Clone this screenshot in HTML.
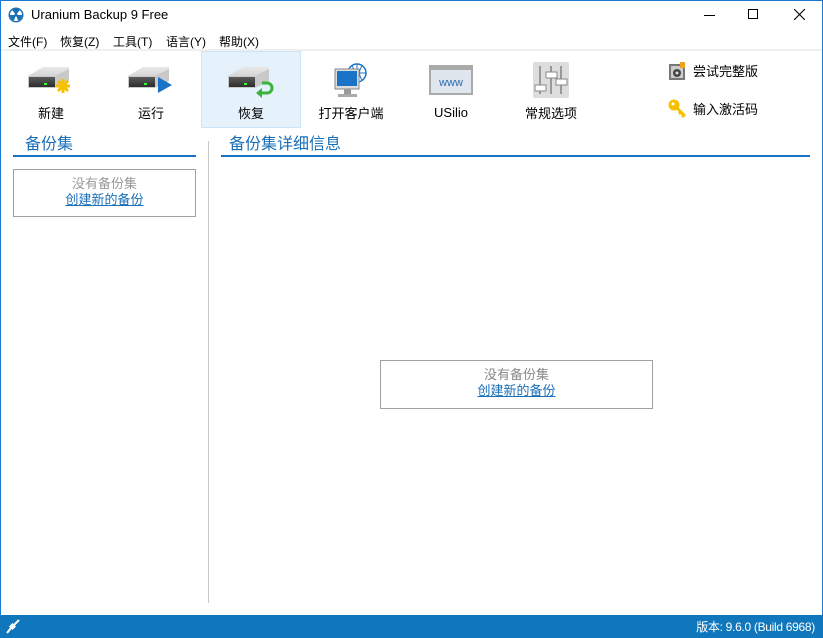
<!DOCTYPE html>
<html><head><meta charset="utf-8"><style>
*{margin:0;padding:0;box-sizing:border-box}
body{width:823px;height:638px;background:#fff;font-family:"Liberation Sans","Noto Sans CJK SC",sans-serif;position:relative;overflow:hidden;color:#000}
.abs{position:absolute}
.t{font-size:12px;white-space:nowrap}
.lbl{position:absolute;font-size:13px;text-align:center;white-space:nowrap}
a{color:#1a6fb8;text-decoration:underline}
</style></head><body>
<div class="abs" style="left:0;top:0;width:823px;height:638px;border:1px solid #1a79d2;border-bottom:none"></div>
<svg class="abs" style="left:8px;top:7px" width="16" height="16" viewBox="0 0 16 16"><circle cx="8" cy="8" r="7.5" fill="#1b6fb5"/><circle cx="8" cy="8" r="6" fill="#fff"/><path d="M8 8 L4 2.8 A6 6 0 0 1 12 2.8Z M8 8 L14 8 A6 6 0 0 1 10 13.6Z M8 8 L6 13.6 A6 6 0 0 1 2 8Z" fill="#1b6fb5"/><circle cx="8" cy="8" r="1.5" fill="#1b6fb5"/></svg>
<div class="abs" style="left:31px;top:7px;font-size:13px">Uranium Backup 9 Free</div>
<div class="abs" style="left:704px;top:15px;width:11px;height:1px;background:#000"></div>
<div class="abs" style="left:748px;top:9px;width:10px;height:10px;border:1px solid #000"></div>
<svg class="abs" style="left:794px;top:9px" width="11" height="11"><path d="M0 0L11 11M11 0L0 11" stroke="#000" stroke-width="1.1"/></svg>
<div class="abs t" style="left:8px;top:33px">文件(F)</div>
<div class="abs t" style="left:60px;top:33px">恢复(Z)</div>
<div class="abs t" style="left:113px;top:33px">工具(T)</div>
<div class="abs t" style="left:166px;top:33px">语言(Y)</div>
<div class="abs t" style="left:219px;top:33px">帮助(X)</div>
<div class="abs" style="left:1px;top:49px;width:821px;height:2px;background:#f0f0f0"></div>
<div class="abs" style="left:201px;top:51px;width:100px;height:77px;background:#e5f1fb;border:1px solid #cce4f7"></div>
<svg class="abs" style="left:0;top:55px" width="600" height="50">
<defs><linearGradient id="tp" x1="0" y1="0" x2="0" y2="1"><stop offset="0" stop-color="#e8e8e8"/><stop offset="1" stop-color="#bdbdbd"/></linearGradient><linearGradient id="fr" x1="0" y1="0" x2="0" y2="1"><stop offset="0" stop-color="#5a5a5a"/><stop offset="1" stop-color="#2e2e2e"/></linearGradient>
<g id="drv"><path d="M0 21 L15 12 L41 12 L41 15 L27 22 L27 33 L0 33Z" fill="url(#tp)"/><path d="M0 21 L27 21 L41 14 L41 26 L27 33 L0 33Z" fill="#c9c9c9"/><rect x="1" y="22" width="26" height="10" fill="url(#fr)"/><rect x="16" y="28" width="3" height="2" fill="#3f3"/></g></defs>
<use href="#drv" x="28" y="0"/><use href="#drv" x="128" y="0"/><use href="#drv" x="228" y="0"/>
<path d="M63 24 v14 M56 31 h14 M58 26 l10 10 M68 26 l-10 10" stroke="#f5c000" stroke-width="3"/>
<path d="M158 22 L172 30 L158 38Z" fill="#1a73c6"/>
<path d="M262 28 h5 a5 5 0 0 1 0 10 h-8" stroke="#3cb43c" stroke-width="3" fill="none"/><path d="M256 38 l6 -5 v10z" fill="#3cb43c"/>
<circle cx="357" cy="18" r="9" fill="#fff" stroke="#1a73c6" stroke-width="1.5"/><path d="M348 18h18M357 9v18M352 11q5 7 0 14M362 11q-5 7 0 14" stroke="#1a73c6" stroke-width="1" fill="none"/>
<rect x="335" y="14" width="24" height="20" fill="#ddd" stroke="#888"/><rect x="337" y="16" width="20" height="15" fill="#1a73c6"/><rect x="344" y="34" width="7" height="5" fill="#999"/><rect x="338" y="39" width="19" height="3" fill="#aaa"/>
<rect x="429" y="10" width="44" height="30" fill="#aaa"/><rect x="431" y="15" width="40" height="23" fill="#dfe6ee"/><text x="451" y="31" font-size="11" fill="#2a6cb0" text-anchor="middle" font-family="Liberation Sans">www</text>
<rect x="533" y="7" width="36" height="36" fill="#ddd" rx="2"/><path d="M540 11v28M551 11v28M561 11v28" stroke="#999" stroke-width="2"/><rect x="535" y="30" width="11" height="6" fill="#fff" stroke="#888"/><rect x="546" y="17" width="11" height="6" fill="#fff" stroke="#888"/><rect x="556" y="24" width="11" height="6" fill="#fff" stroke="#888"/>
</svg>
<div class="lbl" style="left:0;top:103px;width:102px">新建</div>
<div class="lbl" style="left:100px;top:103px;width:102px">运行</div>
<div class="lbl" style="left:200px;top:103px;width:102px">恢复</div>
<div class="lbl" style="left:300px;top:103px;width:102px">打开客户端</div>
<div class="lbl" style="left:400px;top:105px;width:102px">USilio</div>
<div class="lbl" style="left:500px;top:103px;width:102px">常规选项</div>
<svg class="abs" style="left:668px;top:61px" width="20" height="20"><rect x="1" y="3" width="16" height="16" fill="#777"/><rect x="3" y="5" width="12" height="12" fill="#ccc"/><circle cx="9" cy="12" r="4" fill="#444"/><circle cx="9" cy="12" r="1.5" fill="#ddd"/><rect x="12" y="1" width="5" height="6" fill="#f0a020"/></svg>
<div class="abs" style="left:693px;top:61px;font-size:13px">尝试完整版</div>
<svg class="abs" style="left:668px;top:99px" width="20" height="20"><circle cx="6" cy="6" r="5.5" fill="#f5c000"/><circle cx="5" cy="5" r="1.5" fill="#fff"/><path d="M9 9 L17 17 M13 13 l-2 2 M16 16 l-2 2" stroke="#f5c000" stroke-width="3"/></svg>
<div class="abs" style="left:693px;top:99px;font-size:13px">输入激活码</div>
<div class="abs" style="left:25px;top:130px;font-size:16px;color:#1a6fb8">备份集</div>
<div class="abs" style="left:13px;top:155px;width:183px;height:2px;background:#1a73c0"></div>
<div class="abs" style="left:13px;top:169px;width:183px;height:48px;border:1px solid #a0a0a0;text-align:center;font-size:13px;line-height:16px;padding-top:6px"><span style="color:#999">没有备份集</span><br><a>创建新的备份</a></div>
<div class="abs" style="left:208px;top:141px;width:1px;height:462px;background:#c8c8c8"></div>
<div class="abs" style="left:229px;top:130px;font-size:16px;color:#1a6fb8">备份集详细信息</div>
<div class="abs" style="left:221px;top:155px;width:589px;height:2px;background:#1a73c0"></div>
<div class="abs" style="left:380px;top:360px;width:273px;height:49px;border:1px solid #a0a0a0;text-align:center;font-size:13px;line-height:16px;padding-top:6px"><span style="color:#888">没有备份集</span><br><a>创建新的备份</a></div>
<div class="abs" style="left:0;top:615px;width:823px;height:23px;background:#1177bd"></div>
<svg class="abs" style="left:4px;top:617px" width="18" height="18"><path d="M3 16 L7 11 M9 9 L15 3" stroke="#fff" stroke-width="2"/><rect x="6" y="7" width="5" height="5" fill="#fff" transform="rotate(-45 8.5 9.5)"/></svg>
<div class="abs" style="right:8px;top:618px;font-size:12px;color:#fff;letter-spacing:-0.3px">版本: 9.6.0 (Build 6968)</div>
</body></html>
